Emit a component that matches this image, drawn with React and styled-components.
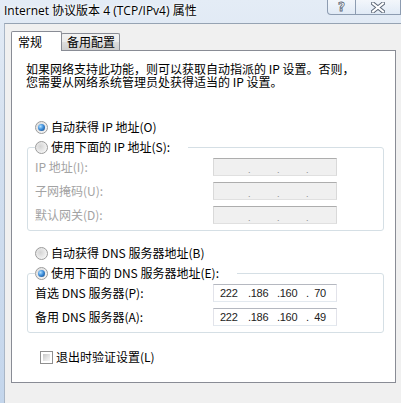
import React from 'react'
import styled, { createGlobalStyle } from 'styled-components'

const GlobalStyle = createGlobalStyle`
  html, body {
    margin: 0;
    padding: 0;
    background: #f0f0f0;
  }
  body {
    font-family: "Noto Sans CJK SC", sans-serif;
    font-size: 12px;
    color: #000;
  }
  * { box-sizing: border-box; }
`

const Window = styled.div`
  width: 401px;
  height: 403px;
  display: flex;
  flex-direction: column;
  overflow: hidden;
  background: linear-gradient(180deg, #e4ecf6 0%, #d2dfef 40%, #c4d6ec 100%);
`

const TitleBar = styled.div`
  height: 23px;
  flex: none;
  display: flex;
  align-items: flex-start;
`

const Title = styled.div`
  padding: 3px 0 0 4px;
  font-family: "Open Sans", "Noto Sans CJK SC", sans-serif;
  font-size: 12px;
  line-height: 15px;
  color: #000;
  text-shadow: 0 0 6px #fff, 0 0 3px #fff;
`

const Caption = styled.div`
  margin-left: auto;
  display: flex;
`

const CapButton = styled.div`
  width: ${p => p.$w}px;
  height: 15px;
  display: flex;
  align-items: center;
  justify-content: center;
  border: 1px solid #8d9cb1;
  border-top: none;
  border-left: ${p => (p.$first ? '1px solid #8d9cb1' : 'none')};
  border-radius: ${p => (p.$first ? '0 0 0 4px' : '0')};
  background: linear-gradient(180deg, rgba(255,255,255,0.55), rgba(220,232,246,0.35));
`

const HelpGlyph = styled.span`
  font-family: "DejaVu Sans", sans-serif;
  font-weight: bold;
  font-size: 12px;
  line-height: 12px;
  color: #fff;
  -webkit-text-stroke: 0.8px #5d6878;
`

const Body = styled.div`
  flex: 1;
  display: flex;
  min-height: 0;
`

const Frame = styled.div`
  width: 4px;
  flex: none;
`

const Client = styled.div`
  flex: 1;
  background: #f0f0f0;
  border-top: 1px solid #96a3b3;
  border-left: 1px solid #a9b6c6;
  padding: 7px 0 0 6px;
`

const TabStrip = styled.div`
  display: flex;
  align-items: flex-end;
  height: 19px;
  position: relative;
  z-index: 1;
`

const Tab = styled.div`
  height: ${p => (p.$active ? 20 : 17)}px;
  margin-bottom: ${p => (p.$active ? -1 : 0)}px;
  margin-left: ${p => (p.$active ? 0 : -1)}px;
  padding: ${p => (p.$active ? '0 19px 0 6px' : '0 4px 0 5px')};
  display: flex;
  align-items: center;
  border: 1px solid #898c95;
  border-bottom: none;
  border-radius: 2px 2px 0 0;
  background: ${p =>
    p.$active
      ? '#fff'
      : 'linear-gradient(180deg, #f2f2f2 0%, #ebebeb 50%, #dddddd 51%, #cfcfcf 100%)'};
  position: relative;
  z-index: ${p => (p.$active ? 2 : 1)};
  font-size: 12px;
  line-height: 14px;
`

const Panel = styled.div`
  width: 385px;
  height: 333px;
  background: #fff;
  border: 1px solid #898c95;
  display: flex;
  flex-direction: column;
`

const Intro = styled.p`
  margin: 11px 0 0 14px;
  line-height: 13px;
  font-size: 12px;
  white-space: nowrap;
`

const OptionRow = styled.div`
  display: flex;
  align-items: center;
  gap: 3px;
  height: 14px;
  margin: ${p => p.$mt}px 0 0 ${p => p.$ml || 23}px;
  line-height: 14px;
  white-space: nowrap;
`

const Radio = styled.span`
  width: 13px;
  height: 13px;
  flex: none;
  border-radius: 50%;
  border: 1px solid #9b9b9b;
  background: radial-gradient(circle at 40% 40%, #d4d4d4 0%, #ececec 55%, #ffffff 100%);
  display: flex;
  align-items: center;
  justify-content: center;

  &::after {
    content: '';
    display: ${p => (p.$checked ? 'block' : 'none')};
    width: 7px;
    height: 7px;
    border-radius: 50%;
    background: radial-gradient(circle at 35% 35%, #b3e2ff 0%, #3f8fdc 45%, #123f75 100%);
  }
`

const CheckBox = styled.span`
  width: 13px;
  height: 13px;
  flex: none;
  border: 1px solid #8f8f8f;
  background: #fff;
  padding: 2px;

  &::after {
    content: '';
    display: block;
    width: 100%;
    height: 100%;
    background: linear-gradient(135deg, #c6c6c6 0%, #e6e6e6 60%, #f6f6f6 100%);
  }
`

const GroupBox = styled.fieldset`
  margin: 6px 11px 0 15px;
  min-width: 0;
  border: 1px solid #d5dfe5;
  border-radius: 3px;
  padding: 4px 0 6px 7px;
`

const GroupLegend = styled.legend`
  padding: 0 18px 0 0;
  margin: 0;
  display: flex;
  align-items: center;
  gap: 3px;
  height: 14px;
  line-height: 14px;
  white-space: nowrap;
`

const Rows = styled.div`
  display: grid;
  gap: 6px;
`

const FieldRow = styled.div`
  display: flex;
  align-items: center;
  height: 18px;
`

const FieldLabel = styled.span`
  width: 178px;
  flex: none;
  color: ${p => (p.$disabled ? '#a3a3a3' : '#000')};
  line-height: 14px;
  white-space: nowrap;
`

const IpBox = styled.div`
  width: 124px;
  height: 18px;
  flex: none;
  display: grid;
  grid-template-columns: 34px 29px 29px 1fr;
  align-items: center;
  border: 1px solid ${p => (p.$disabled ? '#d9d9d9' : '#e2e3ea')};
  border-top-color: ${p => (p.$disabled ? '#adadad' : '#b5b8c0')};
  border-bottom-color: ${p => (p.$disabled ? '#e0e0e0' : '#e3e9ef')};
  background: ${p => (p.$disabled ? '#f0f0f0' : '#fff')};
  font-family: "Liberation Sans", Arial, sans-serif;
  font-size: 11px;
  letter-spacing: -0.3px;
  line-height: 16px;
  color: ${p => (p.$disabled ? '#8a8a8a' : '#222')};
  white-space: pre;
`

const Octet = styled.span`
  padding-left: ${p => (p.$first ? 6 : 0)}px;
  ${p => (p.$disabled ? 'padding-top: 3px; font-size: 9px;' : '')}
`

function IpField({ value, disabled }) {
  const parts = disabled ? ['', '.', '.', '.'] : value
  return (
    <IpBox $disabled={disabled}>
      {parts.map((p, i) => (
        <Octet key={i} $first={i === 0} $disabled={disabled}>{p}</Octet>
      ))}
    </IpBox>
  )
}

function CloseGlyph() {
  return (
    <svg width="14" height="11" viewBox="0 0 14 11">
      <path d="M2 1.5 L12 9.5 M12 1.5 L2 9.5" stroke="#5d6878" strokeWidth="4" strokeLinecap="square" />
      <path d="M2 1.5 L12 9.5 M12 1.5 L2 9.5" stroke="#ffffff" strokeWidth="2" strokeLinecap="square" />
    </svg>
  )
}

export default function App() {
  return (
    <>
      <GlobalStyle />
      <Window>
        <TitleBar>
          <Title>Internet 协议版本 4 (TCP/IPv4) 属性</Title>
          <Caption>
            <CapButton $w={29} $first><HelpGlyph>?</HelpGlyph></CapButton>
            <CapButton $w={45}><CloseGlyph /></CapButton>
          </Caption>
        </TitleBar>
        <Body>
          <Frame />
          <Client>
            <TabStrip>
              <Tab $active>常规</Tab>
              <Tab>备用配置</Tab>
            </TabStrip>
            <Panel>
              <Intro>
                如果网络支持此功能，则可以获取自动指派的 IP 设置。否则，<br />
                您需要从网络系统管理员处获得适当的 IP 设置。
              </Intro>

              <OptionRow $mt={32}>
                <Radio $checked />
                <span>自动获得 IP 地址(O)</span>
              </OptionRow>
              <GroupBox>
                <GroupLegend>
                  <Radio />
                  <span>使用下面的 IP 地址(S):</span>
                </GroupLegend>
                <Rows>
                  <FieldRow>
                    <FieldLabel $disabled>IP 地址(I):</FieldLabel>
                    <IpField disabled />
                  </FieldRow>
                  <FieldRow>
                    <FieldLabel $disabled>子网掩码(U):</FieldLabel>
                    <IpField disabled />
                  </FieldRow>
                  <FieldRow>
                    <FieldLabel $disabled>默认网关(D):</FieldLabel>
                    <IpField disabled />
                  </FieldRow>
                </Rows>
              </GroupBox>

              <OptionRow $mt={15}>
                <Radio />
                <span>自动获得 DNS 服务器地址(B)</span>
              </OptionRow>
              <GroupBox>
                <GroupLegend>
                  <Radio $checked />
                  <span>使用下面的 DNS 服务器地址(E):</span>
                </GroupLegend>
                <Rows>
                  <FieldRow>
                    <FieldLabel>首选 DNS 服务器(P):</FieldLabel>
                    <IpField value={['222', '.186', '.160', '.  70']} />
                  </FieldRow>
                  <FieldRow>
                    <FieldLabel>备用 DNS 服务器(A):</FieldLabel>
                    <IpField value={['222', '.186', '.160', '.  49']} />
                  </FieldRow>
                </Rows>
              </GroupBox>

              <OptionRow $mt={17} $ml={28}>
                <CheckBox />
                <span>退出时验证设置(L)</span>
              </OptionRow>
            </Panel>
          </Client>
        </Body>
      </Window>
    </>
  )
}
